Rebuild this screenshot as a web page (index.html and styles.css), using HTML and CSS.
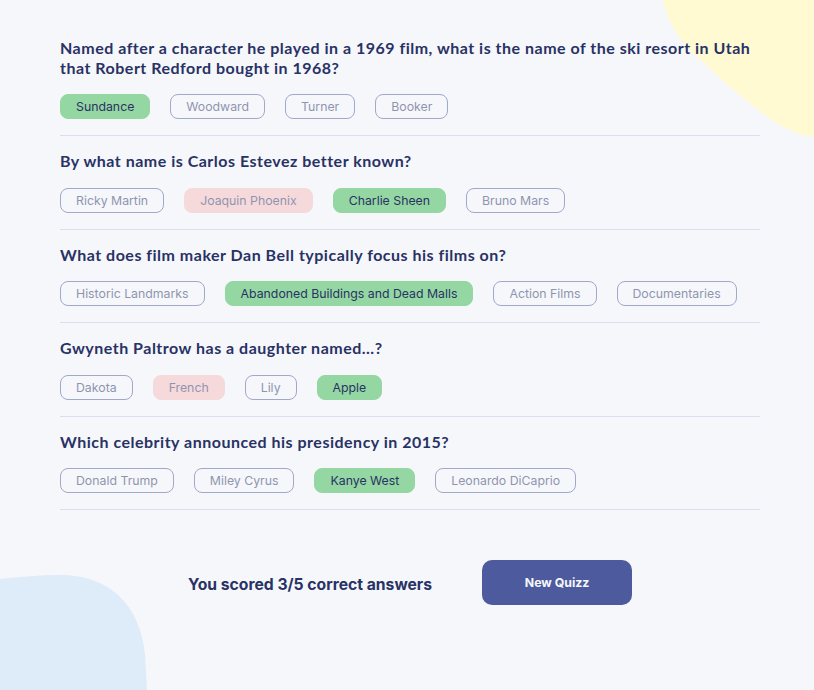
FILE: index.html
```html
<!DOCTYPE html>
<html lang="en">
<head>
<meta charset="utf-8">
<title>Quizzical</title>
<link rel="stylesheet" href="styles.css">
</head>
<body>
<svg class="blob blob-yellow" width="152" height="140" viewBox="662 0 152 140" aria-hidden="true">
  <path d="M663 0 C667 20 678 40 700 60 C720 78 735 92 750 103 C770 120 790 134 814 137 L814 0 Z" fill="#FFFAD1"/>
</svg>
<svg class="blob blob-blue" width="150" height="116" viewBox="0 574 150 116" aria-hidden="true">
  <path d="M0 579 C20 577 40 575 60 575 C110 575 140 605 145 655 L147 690 L0 690 Z" fill="#DEEBF8"/>
</svg>
<main class="quiz">
  <section class="question">
    <h2 class="question-title">Named after a character he played in a 1969 film, what is the name of the ski resort in Utah that Robert Redford bought in 1968?</h2>
    <div class="answers">
      <span class="answer correct">Sundance</span>
      <span class="answer">Woodward</span>
      <span class="answer">Turner</span>
      <span class="answer">Booker</span>
    </div>
  </section>
  <section class="question">
    <h2 class="question-title">By what name is Carlos Estevez better known?</h2>
    <div class="answers">
      <span class="answer">Ricky Martin</span>
      <span class="answer wrong">Joaquin Phoenix</span>
      <span class="answer correct">Charlie Sheen</span>
      <span class="answer">Bruno Mars</span>
    </div>
  </section>
  <section class="question">
    <h2 class="question-title">What does film maker Dan Bell typically focus his films on?</h2>
    <div class="answers">
      <span class="answer">Historic Landmarks</span>
      <span class="answer correct">Abandoned Buildings and Dead Malls</span>
      <span class="answer">Action Films</span>
      <span class="answer">Documentaries</span>
    </div>
  </section>
  <section class="question">
    <h2 class="question-title">Gwyneth Paltrow has a daughter named...?</h2>
    <div class="answers">
      <span class="answer">Dakota</span>
      <span class="answer wrong">French</span>
      <span class="answer">Lily</span>
      <span class="answer correct">Apple</span>
    </div>
  </section>
  <section class="question">
    <h2 class="question-title">Which celebrity announced his presidency in 2015?</h2>
    <div class="answers">
      <span class="answer">Donald Trump</span>
      <span class="answer">Miley Cyrus</span>
      <span class="answer correct">Kanye West</span>
      <span class="answer">Leonardo DiCaprio</span>
    </div>
  </section>
  <div class="result">
    <p class="score">You scored 3/5 correct answers</p>
    <button class="new-quiz">New Quizz</button>
  </div>
</main>
</body>
</html>
```
FILE: styles.css
```css
* { box-sizing: border-box; }
html, body { margin: 0; padding: 0; }
body {
  background: #F5F7FB;
  width: 814px;
  height: 690px;
  overflow: hidden;
  position: relative;
  font-family: Inter, "Noto Sans", sans-serif;
  color: #293264;
}
.blob { position: absolute; z-index: 0; display: block; }
.blob-yellow { top: 0; right: 0; }
.blob-blue { left: 0; bottom: 0; }
.quiz {
  position: relative;
  z-index: 1;
  width: 700px;
  margin-left: 60px;
  padding-top: 23px;
}
.question {
  padding: 15px 0 16px;
  border-bottom: 1px solid #DBDEF0;
}
.question-title {
  margin: 0 0 17px;
  font-family: Lato, "Liberation Sans", sans-serif;
  font-weight: 700;
  font-size: 16px;
  letter-spacing: 0.5px;
  line-height: 19.5px;
  color: #293264;
}
.answers {
  display: flex;
  gap: 20px;
}
.answer {
  display: block;
  height: 25px;
  padding: 4px 15px;
  border: 1px solid #4D5B9E;
  border-radius: 8px;
  font-size: 12.3px;
  line-height: 15px;
  color: #293264;
  opacity: 0.5;
}
.answer.correct {
  background: #94D7A2;
  border-color: #94D7A2;
  opacity: 1;
}
.answer.wrong {
  background: #F8BCBC;
  border-color: #F8BCBC;
}
.result {
  margin-top: 50px;
  display: flex;
  justify-content: center;
  align-items: center;
  gap: 50px;
}
.score {
  margin: 3px 0 0;
  font-size: 15.7px;
  font-weight: 700;
  color: #293264;
}
.new-quiz {
  width: 150px;
  height: 45px;
  border: none;
  border-radius: 10px;
  background: #4D5B9E;
  color: #F5F7FB;
  font-family: Inter, sans-serif;
  font-weight: 700;
  font-size: 12.3px;
}
```
